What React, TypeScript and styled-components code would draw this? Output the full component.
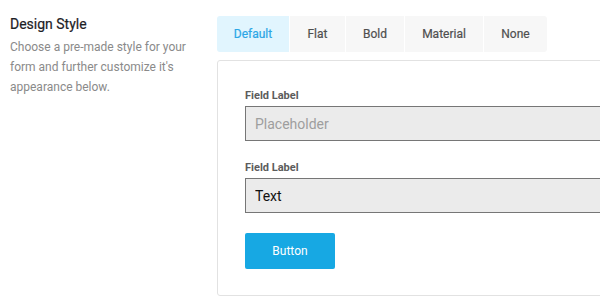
import React from 'react';
import styled, { createGlobalStyle } from 'styled-components';

const GlobalStyle = createGlobalStyle`
  body {
    margin: 0;
    background: #ffffff;
    font-family: Roboto, "Liberation Sans", sans-serif;
  }
`;

const Page = styled.div`
  width: 600px;
  height: 300px;
  overflow: hidden;
  display: flex;
  padding: 16px 0 0 10px;
  box-sizing: border-box;
`;

const Intro = styled.div`
  width: 207px;
  flex-shrink: 0;
`;

const Title = styled.h3`
  margin: 0;
  font-size: 14px;
  line-height: 16px;
  font-weight: 400;
  color: #1d2125;
  -webkit-text-stroke: 0.2px #1d2125;
`;

const Description = styled.p`
  margin: 5px 0 0;
  max-width: 190px;
  font-size: 12px;
  line-height: 20px;
  color: #8a8a8a;
`;

const Settings = styled.div`
  display: flex;
  flex-direction: column;
  gap: 8px;
`;

const Tabs = styled.div`
  display: flex;
  gap: 1px;
`;

const Tab = styled.button<{ $active?: boolean; $width: number }>`
  width: ${(p) => p.$width}px;
  height: 36px;
  border: none;
  padding: 0;
  font-family: inherit;
  font-size: 12px;
  font-weight: 400;
  color: ${(p) => (p.$active ? '#2ba6e6' : '#4f4f4f')};
  -webkit-text-stroke: 0.2px ${(p) => (p.$active ? '#2ba6e6' : '#4f4f4f')};
  background: ${(p) => (p.$active ? '#e1f5fe' : '#f7f7f7')};
  cursor: pointer;

  &:first-child {
    border-radius: 3px 0 0 3px;
  }
  &:last-child {
    border-radius: 0 3px 3px 0;
  }
`;

const Preview = styled.div`
  width: 420px;
  height: 236px;
  box-sizing: border-box;
  border: 1px solid #e2e2e2;
  border-radius: 3px;
  padding: 28px 27px;
  display: flex;
  flex-direction: column;
  gap: 20px;
`;

const Field = styled.div`
  display: flex;
  flex-direction: column;
  gap: 4px;
`;

const Label = styled.label`
  font-size: 11px;
  line-height: 13px;
  font-weight: 700;
  color: #5c5c5c;
`;

const Input = styled.input`
  width: 100%;
  height: 35px;
  box-sizing: border-box;
  border: 1px solid #767676;
  background: #ebebeb;
  padding: 0 9px;
  font-family: inherit;
  font-size: 14px;
  color: #111111;
  outline: none;

  &::placeholder {
    color: #9e9e9e;
  }
`;

const Button = styled.button`
  width: 90px;
  height: 36px;
  border: none;
  border-radius: 2px;
  background: #17a8e3;
  color: #ffffff;
  font-family: inherit;
  font-size: 12px;
  font-weight: 400;
  cursor: pointer;
`;

const styles = [
  { name: 'Default', width: 72 },
  { name: 'Flat', width: 55 },
  { name: 'Bold', width: 58 },
  { name: 'Material', width: 78 },
  { name: 'None', width: 63 },
];

const App: React.FC = () => {
  return (
    <>
      <GlobalStyle />
      <Page>
        <Intro>
          <Title>Design Style</Title>
          <Description>
            Choose a pre-made style for your form and further customize it's appearance below.
          </Description>
        </Intro>

        <Settings>
          <Tabs>
            {styles.map((s) => (
              <Tab key={s.name} $width={s.width} $active={s.name === 'Default'}>
                {s.name}
              </Tab>
            ))}
          </Tabs>

          <Preview>
            <Field>
              <Label>Field Label</Label>
              <Input placeholder="Placeholder" readOnly />
            </Field>
            <Field>
              <Label>Field Label</Label>
              <Input defaultValue="Text" readOnly />
            </Field>
            <div>
              <Button>Button</Button>
            </div>
          </Preview>
        </Settings>
      </Page>
    </>
  );
};

export default App;
